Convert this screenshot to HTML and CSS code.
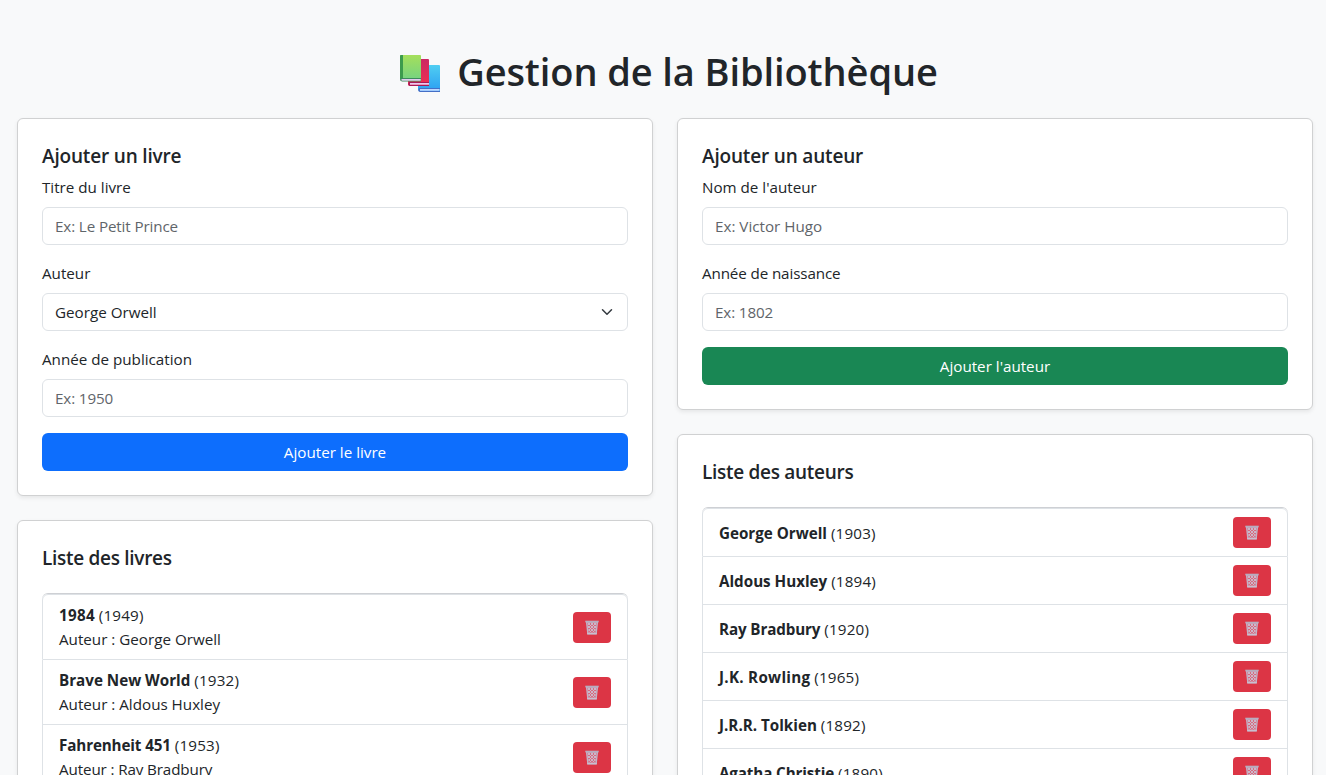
FILE: index.html
```html
<!DOCTYPE html>
<html lang="fr">
<head>
<meta charset="utf-8">
<title>Gestion de la Bibliothèque</title>
<link rel="stylesheet" href="styles.css">
</head>
<body>
<svg class="sprite" aria-hidden="true">
  <symbol id="trash" viewBox="0 0 14 15">
    <path d="M1.600 2h10.800l-1.300 11.700H2.900z" fill="#d76b80" stroke="#c0b3c6" stroke-width="1.400"/>
    <path d="M3 3l7.500 7.500M6 3l5 5M9 3l2 2M3 6l6.500 6.500M3.300 9.400l3 3M11 3l-7.500 7.500M8 3L3 8M5 3L3 5M11 6l-6.500 6.500M10.700 9.400l-3 3" stroke="#cbbfd1" stroke-width=".9"/>
    <path d="M.3.700h13.400v1.700H.3z" fill="#b8adbf"/>
    <path d="M2.200 12.800h9.600v1.500H2.200z" fill="#c9bfd0"/>
  </symbol>
</svg>
<main class="page">
  <h1 class="page-title">
    <svg class="books" viewBox="0 0 42 40" aria-hidden="true">
      <defs>
        <linearGradient id="g" x2="0" y2="1"><stop stop-color="#a5df5b"/><stop offset="1" stop-color="#73d283"/></linearGradient>
        <linearGradient id="r" x2="0" y2="1"><stop stop-color="#cb2863"/><stop offset="1" stop-color="#ef2f52"/></linearGradient>
        <linearGradient id="b" x2="0" y2="1"><stop stop-color="#50cef2"/><stop offset="1" stop-color="#2c9ff2"/></linearGradient>
      </defs>
      <path d="M20 11h19q1 0 1 1v25H20a2 2 0 0 1-2-2V13q0-2 2-2z" fill="url(#b)"/>
      <path d="M19 34h21v1H20v2h20v1H20q-3-1-1-4z" fill="#446fc6"/><path d="M20 35h19.500v1.800H20z" fill="#bfd6ff"/>
      <path d="M10 5h18q1 0 1 1v26H10q-2 0-2-2V7q0-2 2-2z" fill="url(#r)"/>
      <path d="M9 28h20v1H10v2h19v1H10q-3-1-1-4z" fill="#a91957"/><path d="M10 29h19v1.700H10z" fill="#e8c8ef"/>
      <path d="M1 1h19q1 0 1 1v25H2q-2 0-2-2V2q0-1 1-1z" fill="url(#g)"/>
      <path d="M1 1h2v24H0V2q0-1 1-1z" fill="#3c9b4d"/>
      <path d="M1 24h20v1H2v1.500h19v1H2q-3-1-1-3.500z" fill="#3c8a5c"/><path d="M1.500 25h19v1.700h-19z" fill="#e3c9f0"/>
    </svg>
    <span>Gestion de la Bibliothèque</span>
  </h1>
  <div class="columns">
    <div class="column">
      <section class="card">
        <h5 class="card-title">Ajouter un livre</h5>
        <div class="field"><label class="label" for="titre">Titre du livre</label><input class="control tight" id="titre" placeholder="Ex: Le Petit Prince"></div>
        <div class="field"><span class="label">Auteur</span><div class="control select"><span>George Orwell</span><svg class="chevron" viewBox="0 0 16 16"><path d="m2 5 6 6 6-6"/></svg></div></div>
        <div class="field"><label class="label" for="publication">Année de publication</label><input class="control tight" id="publication" placeholder="Ex: 1950"></div>
        <button class="btn primary">Ajouter le livre</button>
      </section>
      <section class="card">
        <h5 class="card-title list-title">Liste des livres</h5>
        <ul class="list">
          <li class="item"><div><strong class="loose">1984</strong> <span class="year">(1949)</span><br>Auteur : George Orwell</div><button class="delete"><svg><use href="#trash"/></svg></button></li>
          <li class="item"><div><strong>Brave New World</strong> <span class="year">(1932)</span><br>Auteur : Aldous Huxley</div><button class="delete"><svg><use href="#trash"/></svg></button></li>
          <li class="item"><div><strong class="tight">Fahrenheit 451</strong> <span class="year">(1953)</span><br><span class="tight">Auteur : Ray Bradbury</span></div><button class="delete"><svg><use href="#trash"/></svg></button></li>
        </ul>
      </section>
    </div>
    <div class="column">
      <section class="card">
        <h5 class="card-title">Ajouter un auteur</h5>
        <div class="field"><label class="label" for="nom">Nom de l'auteur</label><input class="control" id="nom" placeholder="Ex: Victor Hugo"></div>
        <div class="field"><label class="label tight" for="naissance">Année de naissance</label><input class="control tight" id="naissance" placeholder="Ex: 1802"></div>
        <button class="btn success">Ajouter l'auteur</button>
      </section>
      <section class="card">
        <h5 class="card-title list-title">Liste des auteurs</h5>
        <ul class="list">
          <li class="item"><div><strong>George Orwell</strong> <span class="year">(1903)</span></div><button class="delete"><svg><use href="#trash"/></svg></button></li>
          <li class="item"><div><strong>Aldous Huxley</strong> <span class="year">(1894)</span></div><button class="delete"><svg><use href="#trash"/></svg></button></li>
          <li class="item"><div><strong class="tight">Ray Bradbury</strong> <span class="year">(1920)</span></div><button class="delete"><svg><use href="#trash"/></svg></button></li>
          <li class="item"><div><strong class="loose">J.K. Rowling</strong> <span class="year">(1965)</span></div><button class="delete"><svg><use href="#trash"/></svg></button></li>
          <li class="item"><div><strong>J.R.R. Tolkien</strong> <span class="year">(1892)</span></div><button class="delete"><svg><use href="#trash"/></svg></button></li>
          <li class="item"><div><strong class="tight">Agatha Christie</strong> <span class="year">(1890)</span></div><button class="delete"><svg><use href="#trash"/></svg></button></li>
        </ul>
      </section>
    </div>
  </div>
</main>
</body>
</html>
```
FILE: styles.css
```css
* { box-sizing: border-box; }
html, body { height: 775px; overflow: hidden; }
body { margin: 0; background: #f8f9fa; color: #212529; font: 15.2px/24px "Open Sans", "Noto Sans", sans-serif; }
.sprite { display: none; }
.page { height: 775px; overflow: hidden; padding: 48px 13px 0 17px; }
.page-title { display: flex; justify-content: center; gap: 15px; height: 48px; margin: 0 0 22px; padding-left: 8px; font-size: 38px; line-height: 47px; font-weight: 600; letter-spacing: -.1px; }
.books { width: 42px; height: 40px; margin-top: 6px; }
.columns { display: grid; grid-template-columns: 1fr 1fr; gap: 24px; align-items: start; }
.card { margin-bottom: 24px; padding: 24px; background: #fff; border: 1px solid #d0d1d2; border-radius: 6px; box-shadow: 0 2px 4px rgba(0, 0, 0, .075); }
.card-title { height: 24px; margin: 0 0 8px; font-size: 19px; line-height: 26px; font-weight: 600; letter-spacing: -.17px; }
.list-title { margin-bottom: 24px; letter-spacing: -.29px; }
.field { margin-bottom: 16px; }
.label { display: block; margin-bottom: 8px; }
.control { display: flex; align-items: center; justify-content: space-between; width: 100%; height: 38px; padding: 0 12px; border: 1px solid #dee2e6; border-radius: 6px; background: #fff; font: inherit; }
.control::placeholder { color: #5f656a; opacity: 1; }
.chevron { width: 16px; height: 12px; fill: none; stroke: #343a40; stroke-width: 2; stroke-linecap: round; stroke-linejoin: round; }
.btn { display: block; width: 100%; height: 38px; padding: 0; border: 0; border-radius: 6px; color: #fff; font: inherit; }
.primary { background: #0d6efd; }
.success { background: #198754; }
.list { margin: 0; padding: 0; list-style: none; border-top: 1px solid #ced0d4; border-radius: 6px; }
.item { display: flex; align-items: center; justify-content: space-between; padding: 8px 16px; border: 1px solid #dee2e6; border-top: 0; }
.item:first-child { border-top: 1px solid #dee2e6; border-radius: 6px 6px 0 0; }
.item strong { font-weight: 700; }
.loose { letter-spacing: .28px; }
.tight { letter-spacing: -.12px; }
.year { letter-spacing: .18px; }
.delete { display: flex; align-items: center; justify-content: center; width: 38px; height: 31px; padding: 0; border: 0; border-radius: 4px; background: #dc3545; }
.delete svg { width: 14px; height: 15px; }
```
